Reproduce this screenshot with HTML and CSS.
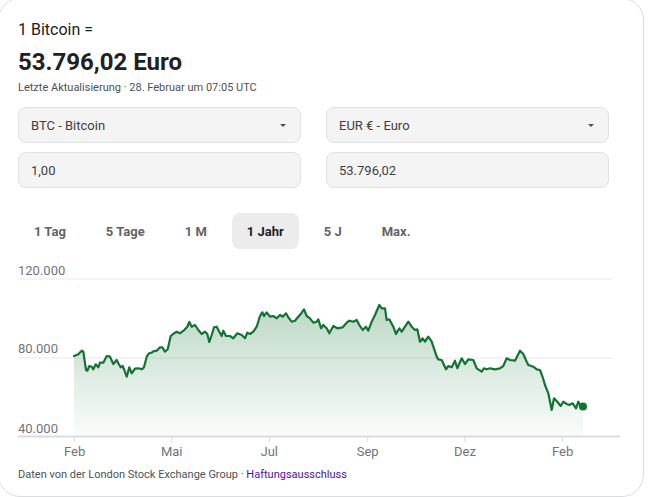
FILE: index.html
```html
<!DOCTYPE html>
<html lang="de">
<head>
<meta charset="utf-8">
<title>Bitcoin in Euro</title>
<link rel="stylesheet" href="styles.css">
</head>
<body>
<div class="card">
  <div class="title">1 Bitcoin =</div>
  <div class="price">53.796,02 Euro</div>
  <div class="updated">Letzte Aktualisierung · 28. Februar um 07:05 UTC</div>

  <div class="converter">
    <div class="field select"><span>BTC - Bitcoin</span><span class="caret"></span></div>
    <div class="field select"><span>EUR € - Euro</span><span class="caret"></span></div>
    <div class="field">1,00</div>
    <div class="field">53.796,02</div>
  </div>

  <div class="tabs">
    <div class="tab">1 Tag</div>
    <div class="tab">5 Tage</div>
    <div class="tab">1 M</div>
    <div class="tab active">1 Jahr</div>
    <div class="tab">5 J</div>
    <div class="tab">Max.</div>
  </div>

  <svg class="chart" width="604" height="200" viewBox="18 260 604 200" xmlns="http://www.w3.org/2000/svg">
    <defs>
      <linearGradient id="fillg" x1="0" y1="0" x2="0" y2="1">
        <stop offset="0" stop-color="#137333" stop-opacity="0.28"/>
        <stop offset="1" stop-color="#137333" stop-opacity="0.02"/>
      </linearGradient>
    </defs>
    <line x1="18" y1="279" x2="613" y2="279" class="grid"/>
    <line x1="18" y1="358" x2="613" y2="358" class="grid"/>
    <path class="area" d="M74,356 L78.3,354.3 L81.7,350.7 L83.3,351.7 L86,370 L87.3,370.7 L89.3,366 L91.7,366.7 L93.3,369.3 L95.7,364.3 L98.3,367.3 L100,362.7 L103.3,362.7 L106.7,356 L110,356.7 L113.3,364 L116.7,360 L118.3,363.3 L120.7,367.3 L122.7,366 L124.3,370 L126.7,376.7 L129.3,367.3 L131.7,373.3 L135,368.7 L138.3,368.3 L141.7,369.3 L144,367.3 L146.7,356.7 L149,353.3 L151.7,352.7 L153.3,351.3 L156.7,350.7 L160,347.3 L162.3,347.3 L165,351.7 L167.7,349.3 L170.7,336 L174,333.3 L176.7,331.7 L180,333.3 L184.3,330 L187.3,326.7 L189.3,322 L191.7,326.7 L195,325 L198.3,330 L201.7,334 L205,331.7 L207.3,334 L209.3,342 L211.7,335 L214,327.3 L216.7,326.7 L219.3,331.7 L221.7,336 L223.3,330.7 L226,336 L230,336 L233.3,338.3 L237.3,333.3 L241.7,335 L245,338.3 L247.3,332.7 L250,334 L253.3,331.7 L256.7,326.7 L260,316 L262.3,312.3 L264,316 L266.7,312.3 L270,316.7 L273.3,316 L276.7,318.3 L280,315 L282.7,316.7 L286,313.3 L288.3,317.3 L291.7,321.7 L295,320.7 L298.3,316.7 L301.7,312.7 L304,309.3 L306.7,316 L310,318.3 L313.3,322.7 L316.7,321.7 L318.3,319.3 L321,328.3 L323.3,325 L326.7,328.3 L329.3,333.3 L333.3,326 L337.3,328.3 L342.7,327.3 L346.7,322.7 L349.3,320.7 L353.3,321.7 L356.7,320 L359.3,325 L362.7,330 L366,326.7 L368.3,330.7 L371.7,321.7 L375,315 L379.3,305 L381.7,308.3 L385,308.3 L386.7,320 L389.3,319.3 L393.3,326.7 L396,334 L399.3,328.3 L401.7,331.7 L405,326.7 L408.3,321.7 L411.7,326.7 L415,330 L417.3,329.3 L420,341.7 L422.7,338.3 L425,341.7 L428.3,336.7 L431.7,341.7 L436.7,356.7 L438.3,359.3 L441.7,360 L446,369.3 L448.3,366 L451.7,367.3 L455,360.7 L457.3,368.3 L461.7,358.3 L465,364 L468.3,359.3 L473.3,360 L476.7,368.3 L481.7,371.7 L484,368.3 L486.7,369.3 L490,368.3 L495,369.3 L500,368.3 L503.3,366 L506.7,358.3 L510,360 L515,360.7 L520,350.7 L523.3,354 L526.7,361.7 L528.3,365 L533.3,366.7 L536.7,369.3 L540,370 L542.7,377.3 L545,385 L548.3,393.3 L550,401.7 L551.7,410 L554,398.3 L557.3,401.7 L560.7,406 L563.3,401.7 L566.7,404 L569.3,405 L572.7,403.3 L576,408.3 L578.3,401.7 L580.7,406.7 L582.7,406 L583,436 L74,436 Z"/>
    <path class="line" d="M74,356 L78.3,354.3 L81.7,350.7 L83.3,351.7 L86,370 L87.3,370.7 L89.3,366 L91.7,366.7 L93.3,369.3 L95.7,364.3 L98.3,367.3 L100,362.7 L103.3,362.7 L106.7,356 L110,356.7 L113.3,364 L116.7,360 L118.3,363.3 L120.7,367.3 L122.7,366 L124.3,370 L126.7,376.7 L129.3,367.3 L131.7,373.3 L135,368.7 L138.3,368.3 L141.7,369.3 L144,367.3 L146.7,356.7 L149,353.3 L151.7,352.7 L153.3,351.3 L156.7,350.7 L160,347.3 L162.3,347.3 L165,351.7 L167.7,349.3 L170.7,336 L174,333.3 L176.7,331.7 L180,333.3 L184.3,330 L187.3,326.7 L189.3,322 L191.7,326.7 L195,325 L198.3,330 L201.7,334 L205,331.7 L207.3,334 L209.3,342 L211.7,335 L214,327.3 L216.7,326.7 L219.3,331.7 L221.7,336 L223.3,330.7 L226,336 L230,336 L233.3,338.3 L237.3,333.3 L241.7,335 L245,338.3 L247.3,332.7 L250,334 L253.3,331.7 L256.7,326.7 L260,316 L262.3,312.3 L264,316 L266.7,312.3 L270,316.7 L273.3,316 L276.7,318.3 L280,315 L282.7,316.7 L286,313.3 L288.3,317.3 L291.7,321.7 L295,320.7 L298.3,316.7 L301.7,312.7 L304,309.3 L306.7,316 L310,318.3 L313.3,322.7 L316.7,321.7 L318.3,319.3 L321,328.3 L323.3,325 L326.7,328.3 L329.3,333.3 L333.3,326 L337.3,328.3 L342.7,327.3 L346.7,322.7 L349.3,320.7 L353.3,321.7 L356.7,320 L359.3,325 L362.7,330 L366,326.7 L368.3,330.7 L371.7,321.7 L375,315 L379.3,305 L381.7,308.3 L385,308.3 L386.7,320 L389.3,319.3 L393.3,326.7 L396,334 L399.3,328.3 L401.7,331.7 L405,326.7 L408.3,321.7 L411.7,326.7 L415,330 L417.3,329.3 L420,341.7 L422.7,338.3 L425,341.7 L428.3,336.7 L431.7,341.7 L436.7,356.7 L438.3,359.3 L441.7,360 L446,369.3 L448.3,366 L451.7,367.3 L455,360.7 L457.3,368.3 L461.7,358.3 L465,364 L468.3,359.3 L473.3,360 L476.7,368.3 L481.7,371.7 L484,368.3 L486.7,369.3 L490,368.3 L495,369.3 L500,368.3 L503.3,366 L506.7,358.3 L510,360 L515,360.7 L520,350.7 L523.3,354 L526.7,361.7 L528.3,365 L533.3,366.7 L536.7,369.3 L540,370 L542.7,377.3 L545,385 L548.3,393.3 L550,401.7 L551.7,410 L554,398.3 L557.3,401.7 L560.7,406 L563.3,401.7 L566.7,404 L569.3,405 L572.7,403.3 L576,408.3 L578.3,401.7 L580.7,406.7 L582.7,406"/>
    <circle cx="583" cy="406.5" r="4" class="dot"/>
    <line x1="18" y1="436.5" x2="620" y2="436.5" class="axis"/>
    <line x1="74.7" y1="437" x2="74.7" y2="442" class="tick"/>
    <line x1="171.7" y1="437" x2="171.7" y2="442" class="tick"/>
    <line x1="269.3" y1="437" x2="269.3" y2="442" class="tick"/>
    <line x1="367.7" y1="437" x2="367.7" y2="442" class="tick"/>
    <line x1="465" y1="437" x2="465" y2="442" class="tick"/>
    <line x1="562.7" y1="437" x2="562.7" y2="442" class="tick"/>
    <text x="18" y="274.5" class="ylab">120.000</text>
    <text x="18" y="353" class="ylab">80.000</text>
    <text x="18" y="432.5" class="ylab">40.000</text>
    <text x="74.7" y="455.5" class="xlab">Feb</text>
    <text x="171.7" y="455.5" class="xlab">Mai</text>
    <text x="269.3" y="455.5" class="xlab">Jul</text>
    <text x="367.7" y="455.5" class="xlab">Sep</text>
    <text x="465" y="455.5" class="xlab">Dez</text>
    <text x="562.7" y="455.5" class="xlab">Feb</text>
  </svg>

  <div class="source">Daten von der London Stock Exchange Group · <a href="#" class="link">Haftungsausschluss</a></div>
</div>
</body>
</html>
```

FILE: styles.css
```css
html, body {
  margin: 0;
  padding: 0;
  background: #ffffff;
  overflow: hidden;
}

body {
  font-family: Roboto, "Liberation Sans", Arial, sans-serif;
  color: #202124;
}

.card {
  box-sizing: border-box;
  width: 646px;
  margin: -2px 0 0 -2px;
  padding: 19px 24px 13px 19px;
  border: 1px solid #dadce0;
  border-radius: 22px;
  background: #fff;
}

.title {
  font-size: 16px;
  line-height: 24px;
}

.price {
  margin-top: 4px;
  font-size: 24px;
  line-height: 32px;
  font-weight: 700;
}

.updated {
  margin-top: 2px;
  font-size: 11px;
  line-height: 16px;
  color: #4d5156;
}

.converter {
  display: grid;
  grid-template-columns: 283px 283px;
  column-gap: 25px;
  row-gap: 9px;
  margin-top: 11px;
}

.field {
  box-sizing: border-box;
  height: 36px;
  display: flex;
  align-items: center;
  justify-content: space-between;
  padding: 0 14px 0 12px;
  border: 1px solid #dfe1e5;
  border-radius: 8px;
  background: #f4f4f4;
  font-size: 13px;
  color: #3c4043;
}

.caret {
  width: 0;
  height: 0;
  border-left: 3px solid transparent;
  border-right: 3px solid transparent;
  border-top: 3px solid #4d5156;
}

.tabs {
  display: flex;
  gap: 10px;
  margin: 25px 0 0 1px;
}

.tab {
  height: 36px;
  display: flex;
  align-items: center;
  padding: 0 15px;
  border-radius: 8px;
  font-size: 13px;
  font-weight: 700;
  color: #5f6368;
}

.tab.active {
  background: #ececec;
  color: #202124;
}

.chart {
  display: block;
  margin-top: 11px;
  overflow: visible;
}

.grid {
  stroke: #f0f0f0;
  stroke-width: 1.5;
}

.axis {
  stroke: #dadce0;
  stroke-width: 2;
}

.tick {
  stroke: #dadce0;
  stroke-width: 1;
}

.area {
  fill: url(#fillg);
  stroke: none;
}

.line {
  fill: none;
  stroke: #137333;
  stroke-width: 2.2;
  stroke-linejoin: round;
  stroke-linecap: round;
}

.dot {
  fill: #137333;
}

.ylab,
.xlab {
  font-family: Roboto, "Liberation Sans", Arial, sans-serif;
  font-size: 13px;
  fill: #70757a;
}

.xlab {
  text-anchor: middle;
}

.source {
  margin-top: 7px;
  font-size: 11px;
  line-height: 16px;
  color: #4d5156;
}

.link {
  color: #4b11a8;
  text-decoration: none;
}
```
